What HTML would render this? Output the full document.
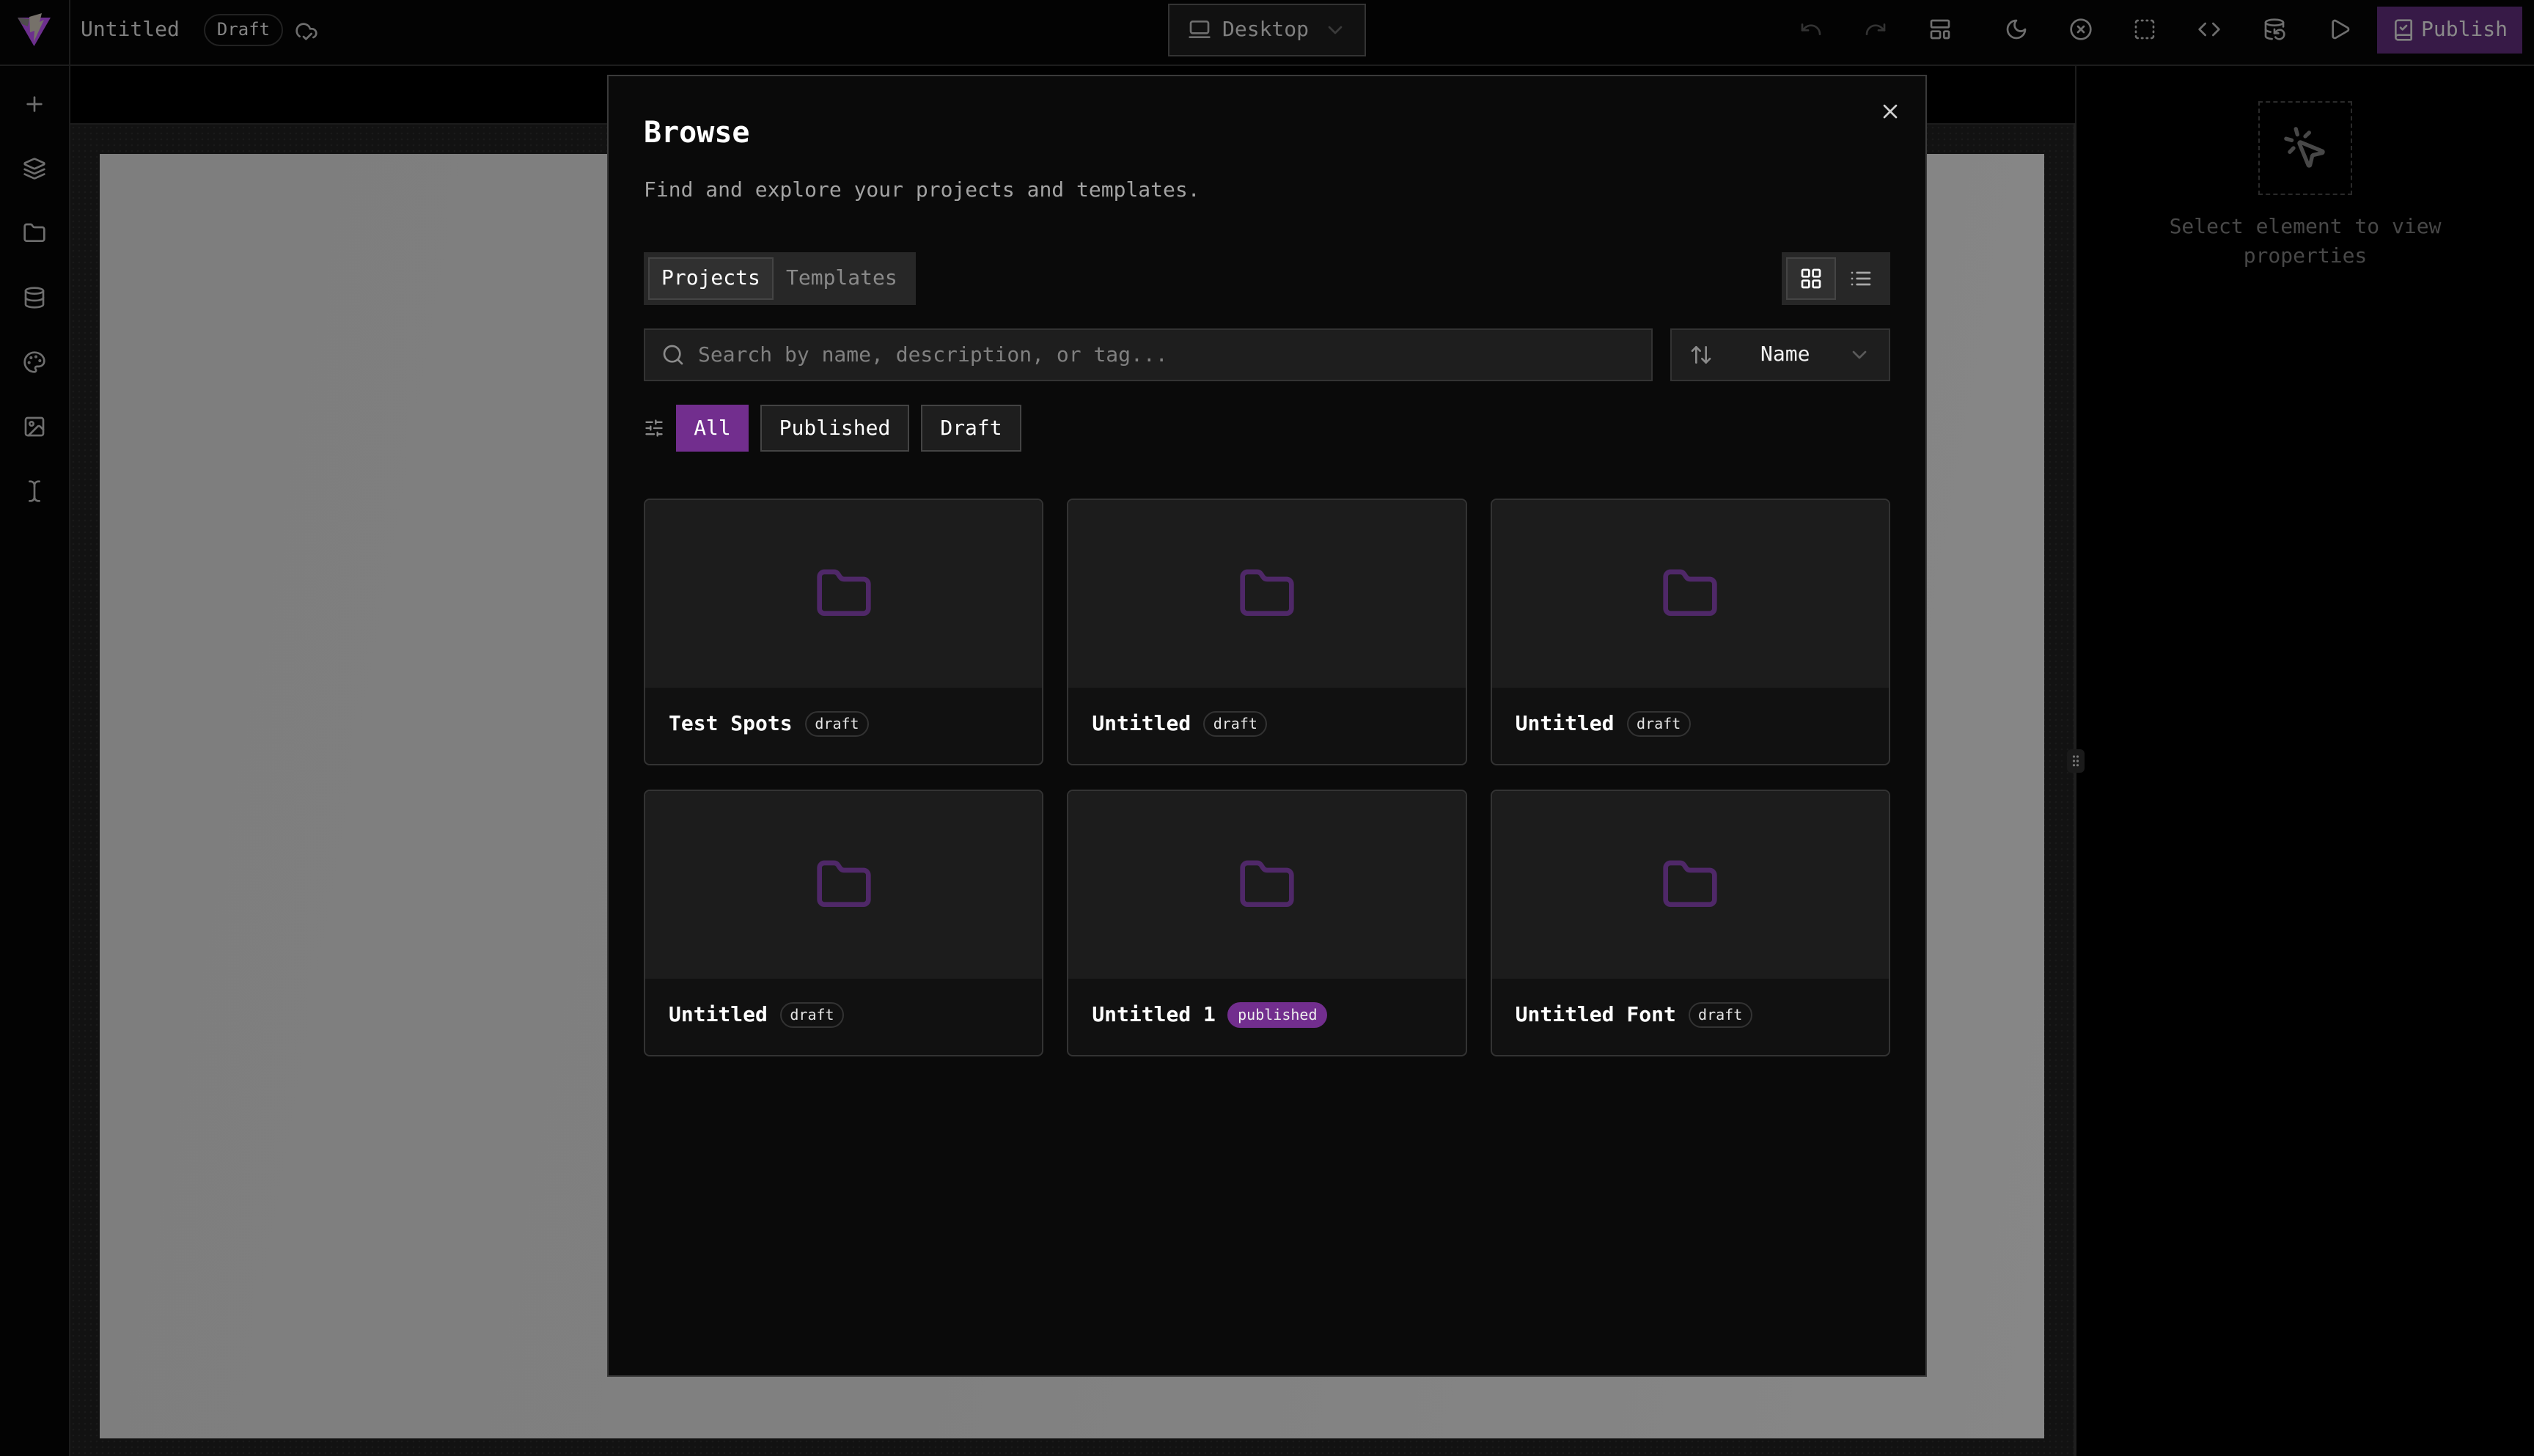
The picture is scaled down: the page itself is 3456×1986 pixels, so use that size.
<!DOCTYPE html>
<html><head><meta charset="utf-8"><title>Browse</title>
<style>
html,body{margin:0;padding:0;background:#000;}
body{width:3456px;height:1986px;overflow:hidden;position:relative;font-family:"DejaVu Sans Mono","Liberation Mono",monospace;font-size:28px;color:#808080;}
div{box-sizing:border-box;position:absolute;}
.t{position:absolute;white-space:pre;line-height:40px;height:40px;}
svg{position:absolute;fill:none;stroke:currentColor;stroke-width:2;stroke-linecap:round;stroke-linejoin:round;width:32px;height:32px;}
.r{color:#6e6e6e;left:31px;}
.h{color:#6e6e6e;top:24px;}
.card{top:0;width:545.33px;height:364px;background:#111;border:2px solid #333;border-radius:8px;overflow:hidden;}
.card .top{left:0;top:0;right:0;height:256px;background:#1c1c1c;}
.card svg{left:230.6px;top:87.5px;width:80px;height:80px;color:#4f2868;}
.card .t{font-weight:bold;color:#fff;left:32px;top:285px;}
.badge{top:288px;height:35px;border:2px solid #333;border-radius:18px;color:#e6e6e6;font-size:20px;line-height:31px;text-align:center;}
.badge.p{background:#722e8e;border-color:#722e8e;color:#eee;}
.f{top:552px;height:64px;background:#1e1e1e;border:2px solid #444;color:#fff;line-height:59px;text-align:center;}
</style></head><body>

<!-- header -->
<div style="left:0;top:0;width:3456px;height:90px;background:#030303;border-bottom:2px solid #1c1c1c"></div>
<div style="left:94px;top:0;width:2px;height:1986px;background:#1c1c1c"></div>
<div style="left:0;top:90px;width:94px;height:1896px;background:#030303"></div>

<!-- logo -->
<svg style="left:20px;top:14px;width:54px;height:54px;stroke:none" viewBox="20 14 54 54">
<polygon points="24,24 69,24 46.5,63" fill="#6d2f8e"/>
<polygon points="24,24 40,26 38,36 30,33" fill="#4f4d4c"/>
<polygon points="40,23 57,18 54,30 60,27 46,57 47,42 41,44" fill="#76716a"/>
</svg>
<span class="t" style="left:110px;top:20px">Untitled</span>
<div style="left:278px;top:19px;width:108px;height:44px;border:2px solid #222;border-radius:22px;color:#858585;font-size:24px;line-height:38px;text-align:center">Draft</div>
<svg style="left:402px;top:26px;color:#6e6e6e" viewBox="0 0 24 24"><path d="m17 15-5.5 5.5L9 18"/><path d="M5 17.743A7 7 0 1 1 15.71 10h1.79a4.5 4.5 0 0 1 1.5 8.742"/></svg>

<!-- device select -->
<div style="left:1593px;top:5px;width:270px;height:72px;background:#111;border:2px solid #333"></div>
<svg style="left:1619.5px;top:24px;color:#6e6e6e" viewBox="0 0 24 24"><rect x="3" y="4" width="18" height="12" rx="2"/><line x1="2" y1="20" x2="22" y2="20"/></svg>
<span class="t" style="left:1667px;top:20px">Desktop</span>
<svg style="left:1805px;top:25px;color:#3a3a3a" viewBox="0 0 24 24"><path d="m6 9 6 6 6-6"/></svg>

<!-- top toolbar -->
<svg class="h" style="left:2454px;color:#333" viewBox="0 0 24 24"><path d="M3 7v6h6"/><path d="M21 17a9 9 0 0 0-9-9 9 9 0 0 0-6 2.3L3 13"/></svg>
<svg class="h" style="left:2542px;color:#333" viewBox="0 0 24 24"><path d="M21 7v6h-6"/><path d="M3 17a9 9 0 0 1 9-9 9 9 0 0 1 6 2.3l3 2.7"/></svg>
<svg class="h" style="left:2630px" viewBox="0 0 24 24"><rect x="3" y="3" width="18" height="7" rx="1"/><rect x="3" y="14" width="9" height="7" rx="1"/><rect x="16" y="14" width="5" height="7" rx="1"/></svg>
<svg class="h" style="left:2734px" viewBox="0 0 24 24"><path d="M12 3a6 6 0 0 0 9 9 9 9 0 1 1-9-9Z"/></svg>
<svg class="h" style="left:2822px" viewBox="0 0 24 24"><circle cx="12" cy="12" r="10"/><path d="m15 9-6 6"/><path d="m9 9 6 6"/></svg>
<svg class="h" style="left:2909px" viewBox="0 0 24 24"><path d="M5 3a2 2 0 0 0-2 2"/><path d="M19 3a2 2 0 0 1 2 2"/><path d="M21 19a2 2 0 0 1-2 2"/><path d="M5 21a2 2 0 0 1-2-2"/><path d="M9 3h1"/><path d="M9 21h1"/><path d="M14 3h1"/><path d="M14 21h1"/><path d="M3 9v1"/><path d="M21 9v1"/><path d="M3 14v1"/><path d="M21 14v1"/></svg>
<svg class="h" style="left:2997px" viewBox="0 0 24 24"><path d="m16 18 6-6-6-6"/><path d="m8 6-6 6 6 6"/></svg>
<svg class="h" style="left:3086px" viewBox="0 0 24 24"><ellipse cx="12" cy="5" rx="9" ry="3"/><path d="M3 12a9 3 0 0 0 5 2.69"/><path d="M21 9.3V5"/><path d="M3 5v14a9 3 0 0 0 6.47 2.88"/><path d="M12 12v4h4"/><path d="M13 20a5 5 0 0 0 9-3 4.5 4.5 0 0 0-4.5-4.5c-1.33 0-2.54.54-3.41 1.41L12 16"/></svg>
<svg class="h" style="left:3175px" viewBox="0 0 24 24"><path d="M5 5a2 2 0 0 1 3.008-1.728l11.997 6.998a2 2 0 0 1 .003 3.458l-12 7A2 2 0 0 1 5 19z"/></svg>
<div style="left:3242px;top:9px;width:198px;height:64px;background:#371a47"></div>
<svg style="left:3262px;top:25px;color:#808080" viewBox="0 0 24 24"><path d="M4 19.5v-15A2.5 2.5 0 0 1 6.5 2H19a1 1 0 0 1 1 1v18a1 1 0 0 1-1 1H6.5a1 1 0 0 1 0-5H20"/><path d="m9 9.5 2 2 4-4"/></svg>
<span class="t" style="left:3302px;top:20px;color:#8a8a8a">Publish</span>

<!-- left rail icons -->
<svg class="r" style="top:126px" viewBox="0 0 24 24"><path d="M5 12h14"/><path d="M12 5v14"/></svg>
<svg class="r" style="top:214px" viewBox="0 0 24 24"><path d="M12.83 2.18a2 2 0 0 0-1.66 0L2.6 6.08a1 1 0 0 0 0 1.83l8.58 3.91a2 2 0 0 0 1.66 0l8.58-3.9a1 1 0 0 0 0-1.83Z"/><path d="m22 17.65-9.17 4.16a2 2 0 0 1-1.66 0L2 17.65"/><path d="m22 12.65-9.17 4.16a2 2 0 0 1-1.66 0L2 12.65"/></svg>
<svg class="r" style="top:302px" viewBox="0 0 24 24"><path d="M20 20a2 2 0 0 0 2-2V8a2 2 0 0 0-2-2h-7.9a2 2 0 0 1-1.69-.9L9.6 3.9A2 2 0 0 0 7.93 3H4a2 2 0 0 0-2 2v13a2 2 0 0 0 2 2Z"/></svg>
<svg class="r" style="top:390px" viewBox="0 0 24 24"><ellipse cx="12" cy="5" rx="9" ry="3"/><path d="M3 5V19A9 3 0 0 0 21 19V5"/><path d="M3 12A9 3 0 0 0 21 12"/></svg>
<svg class="r" style="top:478px" viewBox="0 0 24 24"><circle cx="13.5" cy="6.5" r=".5" fill="currentColor"/><circle cx="17.5" cy="10.5" r=".5" fill="currentColor"/><circle cx="8.5" cy="7.5" r=".5" fill="currentColor"/><circle cx="6.5" cy="12.5" r=".5" fill="currentColor"/><path d="M12 2C6.5 2 2 6.5 2 12s4.5 10 10 10c.926 0 1.648-.746 1.648-1.688 0-.437-.18-.835-.437-1.125-.29-.289-.438-.652-.438-1.125a1.64 1.64 0 0 1 1.668-1.668h1.996c3.051 0 5.555-2.503 5.555-5.554C21.965 6.012 17.461 2 12 2z"/></svg>
<svg class="r" style="top:566px" viewBox="0 0 24 24"><rect x="3" y="3" width="18" height="18" rx="2"/><circle cx="9" cy="9" r="2"/><path d="m21 15-3.086-3.086a2 2 0 0 0-2.828 0L6 21"/></svg>
<svg class="r" style="top:654px" viewBox="0 0 24 24"><path d="M17 22h-1a4 4 0 0 1-4-4V6a4 4 0 0 1 4-4h1"/><path d="M7 22h1a4 4 0 0 0 4-4v-1"/><path d="M7 2h1a4 4 0 0 1 4 4v1"/></svg>

<!-- canvas -->
<div style="left:96px;top:168px;width:2732px;height:1818px;background-color:#121212;background-image:radial-gradient(circle,#1a1a1a 1.2px,transparent 1.4px);background-size:8px 8px;border-top:2px solid #1c1c1c"></div>
<div style="left:136px;top:210px;width:2652px;height:1752px;background:linear-gradient(100deg,#7e7e7e 0%,#808080 45%,#878787 100%)"></div>
<div style="left:2828px;top:90px;width:4px;height:1896px;background:#1f1f1f"></div>
<div style="left:2830px;top:90px;width:2px;height:78px;background:#1c1c1c"></div>
<div style="left:2828px;top:90px;width:2px;height:78px;background:#000"></div>
<div style="left:2819px;top:1022px;width:24px;height:32px;background:#1a1a1a;border-radius:6px"></div>
<svg style="left:2819px;top:1022px;width:24px;height:32px;stroke:none;fill:#777" viewBox="0 0 24 32"><circle cx="9.5" cy="10" r="1.6"/><circle cx="14.5" cy="10" r="1.6"/><circle cx="9.5" cy="16" r="1.6"/><circle cx="14.5" cy="16" r="1.6"/><circle cx="9.5" cy="21.7" r="1.6"/><circle cx="14.5" cy="21.7" r="1.6"/></svg>

<!-- right panel -->
<div style="left:3080px;top:138px;width:128px;height:128px;border:2px dashed #2a2a2a"></div>
<svg style="left:3112px;top:170px;width:64px;height:64px;color:#484848" viewBox="0 0 24 24"><path d="M14 4.1 12 6"/><path d="m5.1 8-2.9-.8"/><path d="m6 12-1.9 2"/><path d="M7.2 2.2 8 5.1"/><path d="M9.037 9.69a.498.498 0 0 1 .653-.653l11 4.5a.5.5 0 0 1-.074.949l-4.349 1.041a1 1 0 0 0-.74.739l-1.04 4.35a.5.5 0 0 1-.95.074z"/></svg>
<div class="t" style="left:2944px;width:400px;top:289px;text-align:center;color:#484848">Select element to view</div>
<div class="t" style="left:2944px;width:400px;top:329px;text-align:center;color:#484848">properties</div>

<!-- modal -->
<div style="left:828px;top:102px;width:1800px;height:1776px;background:#0a0a0a;border:2px solid #3a3a3a"></div>
<span class="t" style="left:878px;top:161px;font-size:40px;font-weight:bold;color:#fff">Browse</span>
<span class="t" style="left:878px;top:239px;color:#a3a3a3">Find and explore your projects and templates.</span>
<svg style="left:2562px;top:136px;color:#cfcfcf" viewBox="0 0 24 24"><path d="M18 6 6 18"/><path d="m6 6 12 12"/></svg>

<!-- tabs -->
<div style="left:878px;top:344px;width:371px;height:72px;background:#272727"></div>
<div style="left:884px;top:351px;width:171px;height:58px;background:#303030;border:2px solid #444"></div>
<span class="t" style="left:902px;top:359px;color:#fff">Projects</span>
<span class="t" style="left:1072px;top:359px;color:#8a8a8a">Templates</span>

<!-- view toggle -->
<div style="left:2430px;top:344px;width:148px;height:72px;background:#272727"></div>
<div style="left:2436px;top:351px;width:68px;height:58px;background:#303030;border:2px solid #444"></div>
<svg style="left:2454px;top:364px;color:#fff" viewBox="0 0 24 24"><rect x="3" y="3" width="7" height="7" rx="1"/><rect x="14" y="3" width="7" height="7" rx="1"/><rect x="14" y="14" width="7" height="7" rx="1"/><rect x="3" y="14" width="7" height="7" rx="1"/></svg>
<svg style="left:2522px;top:364px;color:#a8a8a8" viewBox="0 0 24 24"><path d="M3 12h.01"/><path d="M3 18h.01"/><path d="M3 6h.01"/><path d="M8 12h13"/><path d="M8 18h13"/><path d="M8 6h13"/></svg>

<!-- search -->
<div style="left:878px;top:448px;width:1376px;height:72px;background:#1e1e1e;border:2px solid #333"></div>
<svg style="left:902px;top:468px;color:#8a8a8a" viewBox="0 0 24 24"><circle cx="11" cy="11" r="8"/><path d="m21 21-4.3-4.3"/></svg>
<span class="t" style="left:952px;top:464px;color:#808080">Search by name, description, or tag...</span>

<!-- sort -->
<div style="left:2278px;top:448px;width:300px;height:72px;background:#1e1e1e;border:2px solid #333"></div>
<svg style="left:2304px;top:468px;color:#8a8a8a" viewBox="0 0 24 24"><path d="m21 16-4 4-4-4"/><path d="M17 20V4"/><path d="m3 8 4-4 4 4"/><path d="M7 4v16"/></svg>
<span class="t" style="left:2401px;top:463px;color:#f2f2f2">Name</span>
<svg style="left:2520px;top:468px;color:#5a5a5a" viewBox="0 0 24 24"><path d="m6 9 6 6 6-6"/></svg>

<!-- filters -->
<svg style="left:878px;top:570px;width:28px;height:28px;color:#8a8a8a" viewBox="0 0 24 24"><path d="M10 5H3"/><path d="M12 19H3"/><path d="M14 3v4"/><path d="M16 17v4"/><path d="M21 12h-9"/><path d="M21 19h-5"/><path d="M21 5h-7"/><path d="M8 10v4"/><path d="M8 12H3"/></svg>
<div class="f" style="left:922px;width:99px;background:#722e8e;border-color:#722e8e">All</div>
<div class="f" style="left:1037px;width:203px">Published</div>
<div class="f" style="left:1256px;width:137px">Draft</div>

<!-- row 1 -->
<div style="left:0;top:680px;width:3456px;height:365px">
<div class="card" style="left:878px"><div class="top"></div><svg viewBox="0 0 24 24"><path d="M20 20a2 2 0 0 0 2-2V8a2 2 0 0 0-2-2h-7.9a2 2 0 0 1-1.69-.9L9.6 3.9A2 2 0 0 0 7.93 3H4a2 2 0 0 0-2 2v13a2 2 0 0 0 2 2Z"/></svg><span class="t">Test Spots</span><div class="badge" style="left:218px;width:87px">draft</div></div>
<div class="card" style="left:1455.33px"><div class="top"></div><svg viewBox="0 0 24 24"><path d="M20 20a2 2 0 0 0 2-2V8a2 2 0 0 0-2-2h-7.9a2 2 0 0 1-1.69-.9L9.6 3.9A2 2 0 0 0 7.93 3H4a2 2 0 0 0-2 2v13a2 2 0 0 0 2 2Z"/></svg><span class="t">Untitled</span><div class="badge" style="left:184px;width:87px">draft</div></div>
<div class="card" style="left:2032.67px"><div class="top"></div><svg viewBox="0 0 24 24"><path d="M20 20a2 2 0 0 0 2-2V8a2 2 0 0 0-2-2h-7.9a2 2 0 0 1-1.69-.9L9.6 3.9A2 2 0 0 0 7.93 3H4a2 2 0 0 0-2 2v13a2 2 0 0 0 2 2Z"/></svg><span class="t">Untitled</span><div class="badge" style="left:184px;width:87px">draft</div></div>
</div>

<!-- row 2 -->
<div style="left:0;top:1077px;width:3456px;height:365px">
<div class="card" style="left:878px"><div class="top"></div><svg viewBox="0 0 24 24"><path d="M20 20a2 2 0 0 0 2-2V8a2 2 0 0 0-2-2h-7.9a2 2 0 0 1-1.69-.9L9.6 3.9A2 2 0 0 0 7.93 3H4a2 2 0 0 0-2 2v13a2 2 0 0 0 2 2Z"/></svg><span class="t">Untitled</span><div class="badge" style="left:184px;width:87px">draft</div></div>
<div class="card" style="left:1455.33px"><div class="top"></div><svg viewBox="0 0 24 24"><path d="M20 20a2 2 0 0 0 2-2V8a2 2 0 0 0-2-2h-7.9a2 2 0 0 1-1.69-.9L9.6 3.9A2 2 0 0 0 7.93 3H4a2 2 0 0 0-2 2v13a2 2 0 0 0 2 2Z"/></svg><span class="t">Untitled 1</span><div class="badge p" style="left:217px;width:136px">published</div></div>
<div class="card" style="left:2032.67px"><div class="top"></div><svg viewBox="0 0 24 24"><path d="M20 20a2 2 0 0 0 2-2V8a2 2 0 0 0-2-2h-7.9a2 2 0 0 1-1.69-.9L9.6 3.9A2 2 0 0 0 7.93 3H4a2 2 0 0 0-2 2v13a2 2 0 0 0 2 2Z"/></svg><span class="t">Untitled Font</span><div class="badge" style="left:268px;width:87px">draft</div></div>
</div>

</body></html>
